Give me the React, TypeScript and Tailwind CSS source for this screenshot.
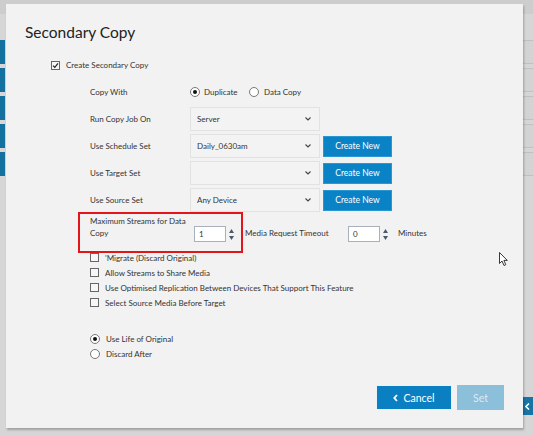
import React from 'react';

const font = { fontFamily: 'Lato, "Liberation Sans", sans-serif' };

const Chevron: React.FC = () => (
  <svg width="6" height="4" viewBox="0 0 6 4" className="shrink-0">
    <path d="M0.5 0.5 L3 3 L5.5 0.5" fill="none" stroke="#444" strokeWidth="1.1" />
  </svg>
);

const Spinner: React.FC = () => (
  <div className="flex flex-col items-center gap-[3px] ml-[3px]">
    <svg width="5" height="4" viewBox="0 0 5 4">
      <path d="M2.5 0 L5 4 L0 4 Z" fill="#4a5a6a" />
    </svg>
    <svg width="5" height="4" viewBox="0 0 5 4">
      <path d="M0 0 L5 0 L2.5 4 Z" fill="#4a5a6a" />
    </svg>
  </div>
);

const Radio: React.FC<{ checked?: boolean }> = ({ checked }) => (
  <span className="w-[10px] h-[10px] rounded-full border border-[#777] bg-white flex items-center justify-center shrink-0">
    {checked && <span className="w-[4px] h-[4px] rounded-full bg-[#111]" />}
  </span>
);

const Box: React.FC<{ checked?: boolean }> = ({ checked }) => (
  <span className="w-[9px] h-[9px] border border-[#666] bg-[#f7f7f7] flex items-center justify-center shrink-0">
    {checked && (
      <svg width="7" height="7" viewBox="0 0 7 7">
        <path d="M1 3.6 L2.8 5.4 L6 1.4" fill="none" stroke="#222" strokeWidth="1.2" />
      </svg>
    )}
  </span>
);

const SelectRow: React.FC<{ label: string; value?: string; create?: boolean }> = ({ label, value, create }) => (
  <div className="flex items-center h-[24px]">
    <div className="w-[100px] text-[#333]">{label}</div>
    <div className="w-[130px] h-[24px] border border-[#e2e2e2] bg-[#f3f3f3] flex items-center justify-between pl-[6px] pr-[8px]">
      <span className="text-[#333]">{value}</span>
      <Chevron />
    </div>
    {create && (
      <button className="ml-[3px] w-[69px] h-[21px] bg-[#0a83c6] text-white text-[8.5px] border border-[#2a96d2]">
        Create New
      </button>
    )}
  </div>
);

const checks = [
  "'Migrate (Discard Original)",
  'Allow Streams to Share Media',
  'Use Optimised Replication Between Devices That Support This Feature',
  'Select Source Media Before Target',
];

export default function App() {
  return (
    <div className="relative w-[533px] h-[436px] overflow-hidden bg-[#d6d6d6]" style={font}>
      {/* page behind the dialog */}
      <div className="h-[14px] bg-[#cdcdcd]" />
      <div className="flex h-[422px]">
        <div className="w-[6px] pt-[26px] flex flex-col gap-[4px]">
          {[0, 1, 2, 3, 4].map((i) => (
            <div key={i} className="w-[5px] h-[24px] bg-[#13709f]" />
          ))}
        </div>
        <div className="flex-1" />
        <div className="w-[10px] pt-[26px] flex flex-col">
          <div className="flex flex-col gap-[4px]">
            {[0, 1, 2, 3, 4].map((i) => (
              <div key={i} className="h-[24px] border-y border-[#c0c0c0] bg-[#d3d3d3]" />
            ))}
          </div>
          <div className="mt-[221px] h-[18px] bg-[#1675a6] flex items-center pl-[2px]">
            <svg width="5" height="7" viewBox="0 0 5 7">
              <path d="M4 0.5 L1 3.5 L4 6.5" fill="none" stroke="#fff" strokeWidth="1.6" />
            </svg>
          </div>
        </div>
      </div>

      {/* dialog */}
      <div className="absolute left-[6px] top-[4px] w-[517px] h-[424px] bg-[#f2f2f2] shadow-[1px_2px_2px_rgba(0,0,0,0.25)] flex flex-col text-[8px] leading-[12px] text-[#333]">
        <h2 className="pl-[19px] pt-[18px] text-[15.5px] leading-[20px] text-[#222]">Secondary Copy</h2>

        <div className="pl-[45px] mt-[17px] flex items-center gap-[6px] h-[12px]">
          <Box checked />
          <span>Create Secondary Copy</span>
        </div>

        <div className="pl-[84px] mt-[9px] flex flex-col gap-[3px]">
          <div className="flex items-center h-[24px]">
            <div className="w-[100px]">Copy With</div>
            <Radio checked />
            <span className="ml-[4px] w-[45px]">Duplicate</span>
            <Radio />
            <span className="ml-[5px]">Data Copy</span>
          </div>
          <SelectRow label="Run Copy Job On" value="Server" />
          <SelectRow label="Use Schedule Set" value="Daily_0630am" create />
          <SelectRow label="Use Target Set" create />
          <SelectRow label="Use Source Set" value="Any Device" create />
        </div>

        <div className="relative pl-[84px] mt-[2px] flex items-start">
          <div className="w-[100px] whitespace-nowrap pt-[1px]">
            Maximum Streams for Data
            <br />
            Copy
          </div>
          <div className="mt-[12px] flex items-center">
            <div className="ml-[4px] w-[32px] h-[16px] border border-[#a8b0bc] bg-white pl-[4px] flex items-center">1</div>
            <Spinner />
          </div>
          <div className="mt-[13px] ml-[11px] w-[103px]">Media Request Timeout</div>
          <div className="mt-[12px] flex items-center">
            <div className="w-[32px] h-[16px] border border-[#a8b0bc] bg-white pl-[4px] flex items-center">0</div>
            <Spinner />
          </div>
          <div className="mt-[13px] ml-[10px]">Minutes</div>
          {/* annotation */}
          <div className="absolute left-[72px] top-[-2px] w-[165px] h-[41px] border-2 border-[#e3151a]" />
        </div>

        <div className="pl-[84px] mt-[8px] flex flex-col">
          {checks.map((c) => (
            <div key={c} className="h-[15px] flex items-center gap-[6px]">
              <Box />
              <span>{c}</span>
            </div>
          ))}
        </div>

        <div className="pl-[84px] mt-[21px] flex flex-col">
          <div className="h-[15px] flex items-center gap-[6px]">
            <Radio checked />
            <span>Use Life of Original</span>
          </div>
          <div className="h-[15px] flex items-center gap-[6px]">
            <Radio />
            <span>Discard After</span>
          </div>
        </div>

        <div className="mt-auto pb-[18px] pr-[19px] flex justify-end gap-[5px]">
          <button className="w-[76px] h-[25px] bg-[#0a80c3] text-white text-[10.5px] flex items-center justify-center gap-[5px] border border-[#e8f2f8]">
            <svg width="5" height="8" viewBox="0 0 5 8">
              <path d="M4 1 L1.3 4 L4 7" fill="none" stroke="#fff" strokeWidth="1.8" />
            </svg>
            Cancel
          </button>
          <button className="w-[47px] h-[25px] bg-[#8bbfda] text-[#dceaf3] text-[10.5px]">Set</button>
        </div>
      </div>

      {/* mouse pointer */}
      <svg className="absolute left-[499px] top-[252px]" width="10" height="15" viewBox="0 0 10 15">
        <path d="M0.5 0.5 L0.5 11.5 L3 9 L5 13.5 L6.8 12.7 L4.9 8.4 L8.3 8.4 Z" fill="#fff" stroke="#222" strokeWidth="0.9" />
      </svg>
    </div>
  );
}
